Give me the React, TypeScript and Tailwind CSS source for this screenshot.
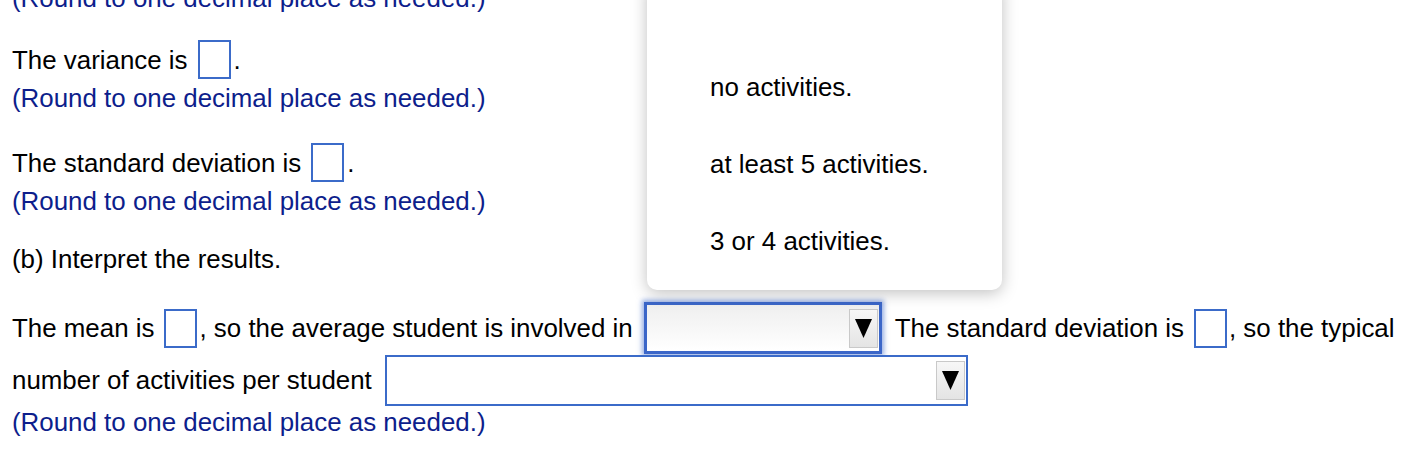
import React from 'react';

const Box: React.FC<{ className?: string }> = ({ className = '' }) => (
  <span className={`inline-block w-[33px] h-[39px] border-2 border-[#3b6bc9] bg-white shrink-0 ${className}`} />
);

const Arrow: React.FC<{ className?: string }> = ({ className = '' }) => (
  <span
    className={`flex items-center justify-center w-[29px] h-[39px] border border-[#c9c9c9] bg-gradient-to-b from-[#f7f7f7] to-[#e4e4e4] ${className}`}
  >
    <svg width="17" height="19" viewBox="0 0 17 19">
      <polygon points="0,0 17,0 8.5,19" fill="#000" />
    </svg>
  </span>
);

const Hint: React.FC<{ className?: string }> = ({ className = '' }) => (
  <div className={`h-[36px] leading-[36px] text-[#0d1e8c] ${className}`}>(Round to one decimal place as needed.)</div>
);

export default function App() {
  return (
    <div
      className="relative w-[1424px] h-[460px] overflow-hidden bg-white text-black text-[25.9px]"
      style={{ fontFamily: '"Liberation Sans", Arial, sans-serif' }}
    >
      <div className="pl-[12px] -mt-[20px]">
        <Hint />

        <div className="mt-[24px] h-[39px] flex items-center leading-[36px]">
          <span>The variance is</span>
          <Box className="ml-[10px]" />
          <span className="ml-[3px]">.</span>
        </div>
        <Hint className="mt-[1px]" />

        <div className="mt-[27px] h-[39px] flex items-center leading-[36px]">
          <span>The standard deviation is</span>
          <Box className="ml-[10px]" />
          <span className="ml-[3px]">.</span>
        </div>
        <Hint className="mt-[1px]" />

        <div className="mt-[22px] h-[36px] leading-[36px]">(b) Interpret the results.</div>

        <div className="mt-[25px] h-[52px] flex items-center leading-[36px] whitespace-nowrap">
          <span>The mean is</span>
          <Box className="ml-[10px]" />
          <span className="ml-[2px]">, so the average student is involved in</span>
          <span className="ml-[11px] w-[238px] h-[52px] shrink-0 border-[3px] border-[#3b66c8] shadow-[0_0_5px_2px_rgba(59,102,200,0.55)] bg-gradient-to-b from-[#efefef] to-white flex items-center justify-end pr-[1px]">
            <Arrow />
          </span>
          <span className="ml-[13px]">The standard deviation is</span>
          <Box className="ml-[10px]" />
          <span className="ml-[2px]">, so the typical</span>
        </div>

        <div className="mt-[8px] h-[36px] flex items-center leading-[36px] whitespace-nowrap">
          <span>number of activities per student</span>
          <span className="ml-[13px] w-[583px] h-[51px] shrink-0 border-2 border-[#3b6bc9] bg-white flex items-center justify-end pr-[1px]">
            <Arrow />
          </span>
        </div>
        <Hint className="mt-[6px]" />
      </div>

      <div className="absolute left-[647px] -top-[20px] w-[355px] h-[310px] bg-white rounded-[10px] shadow-[0_3px_16px_rgba(0,0,0,0.25)] pl-[63px] pt-[89px]">
        <div className="h-[77px] leading-[36px]">no activities.</div>
        <div className="h-[77px] leading-[36px]">at least 5 activities.</div>
        <div className="h-[77px] leading-[36px]">3 or 4 activities.</div>
      </div>
    </div>
  );
}
